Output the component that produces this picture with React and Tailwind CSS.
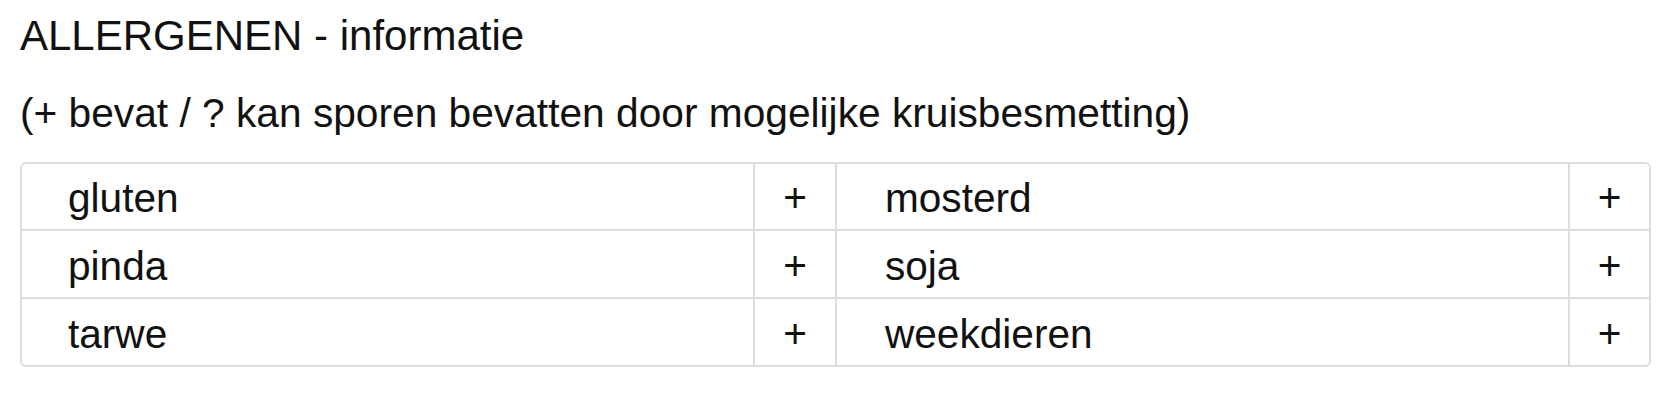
import React from "react";

const rows = [
  ["gluten", "+", "mosterd", "+"],
  ["pinda", "+", "soja", "+"],
  ["tarwe", "+", "weekdieren", "+"],
];

const App = () => {
  return (
    <div className="min-h-screen bg-white pl-[20px] pr-[29px] pt-[12px] text-[#111] font-['Liberation_Sans',Arial,sans-serif]">
      <h1 className="text-[42px] leading-[48px] font-normal">ALLERGENEN - informatie</h1>
      <p className="mt-[29px] text-[40.7px] leading-[48px]">
        (+ bevat / ? kan sporen bevatten door mogelijke kruisbesmetting)
      </p>

      <div className="mt-[25px] border-2 border-[#dddddd] rounded-[6px] overflow-hidden">
        {rows.map((row, i) => (
          <div
            key={i}
            className={`flex ${i > 0 ? "h-[68px] border-t-2 border-[#dddddd]" : "h-[65px]"}`}
          >
            <div className="w-[733px] border-r-2 border-[#dddddd] flex items-center pl-[46px] pt-[4px] text-[40.6px]">
              {row[0]}
            </div>
            <div className="w-[82px] border-r-2 border-[#dddddd] flex items-center justify-center pt-[4px] text-[40.6px]">
              {row[1]}
            </div>
            <div className="flex-1 border-r-2 border-[#dddddd] flex items-center pl-[48px] pt-[4px] text-[40.6px]">
              {row[2]}
            </div>
            <div className="w-[79px] flex items-center justify-center pt-[4px] text-[40.6px]">
              {row[3]}
            </div>
          </div>
        ))}
      </div>
    </div>
  );
};

export default App;
